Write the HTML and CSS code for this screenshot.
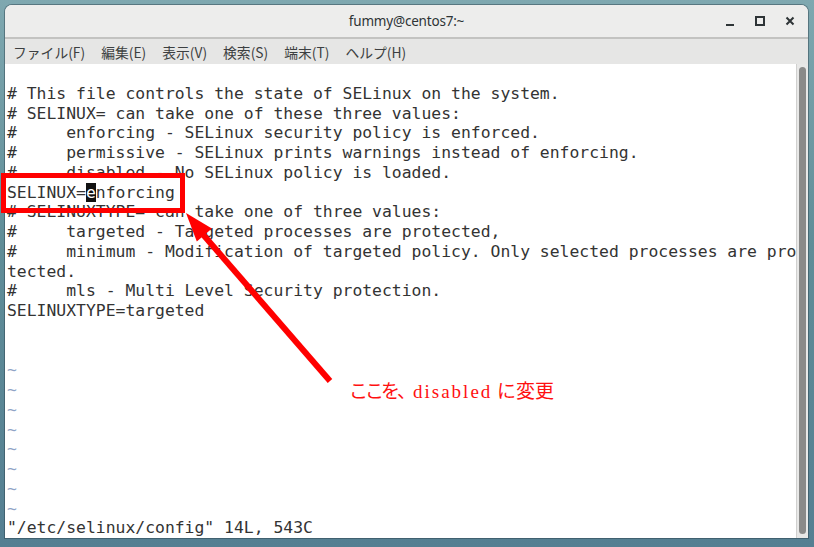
FILE: index.html
```html
<html>

<head>
    <link rel="stylesheet" href="styles.css">
</head>

<body>
    <div class="window">
        <div class="titlebar">
            <div></div>
            <div class="title">fummy@centos7:~</div>
            <div class="controls">
                <span class="ctl ctl-min"></span>
                <span class="ctl ctl-max"></span>
                <span class="ctl ctl-close">
                    <svg width="10" height="10" viewBox="0 0 10 10">
                        <path d="M1.5 1.5 L8.5 8.5 M8.5 1.5 L1.5 8.5" stroke="#2e3436" stroke-width="2" />
                    </svg>
                </span>
            </div>
        </div>
        <div class="menubar">
            <span>ファイル(F)</span>
            <span>編集(E)</span>
            <span>表示(V)</span>
            <span>検索(S)</span>
            <span>端末(T)</span>
            <span>ヘルプ(H)</span>
        </div>
        <div class="terminal">
            <div class="screen">
                <div class="row"> </div>
                <div class="row"># This file controls the state of SELinux on the system.</div>
                <div class="row"># SELINUX= can take one of these three values:</div>
                <div class="row">#     enforcing - SELinux security policy is enforced.</div>
                <div class="row">#     permissive - SELinux prints warnings instead of enforcing.</div>
                <div class="row">#     disabled - No SELinux policy is loaded.</div>
                <div class="row">SELINUX=<span class="cursor">e</span>nforcing</div>
                <div class="row"># SELINUXTYPE= can take one of three values:</div>
                <div class="row">#     targeted - Targeted processes are protected,</div>
                <div class="row">#     minimum - Modification of targeted policy. Only selected processes are pro</div>
                <div class="row">tected.</div>
                <div class="row">#     mls - Multi Level Security protection.</div>
                <div class="row">SELINUXTYPE=targeted</div>
                <div class="row"> </div>
                <div class="row"> </div>
                <div class="row tilde">~</div>
                <div class="row tilde">~</div>
                <div class="row tilde">~</div>
                <div class="row tilde">~</div>
                <div class="row tilde">~</div>
                <div class="row tilde">~</div>
                <div class="row tilde">~</div>
                <div class="row tilde">~</div>
                <div class="row">"/etc/selinux/config" 14L, 543C</div>
            </div>
            <div class="scrollbar">
                <div class="thumb"></div>
            </div>
        </div>
    </div>

    <!-- annotation drawn over the screenshot -->
    <svg class="markup" width="814" height="547" viewBox="0 0 814 547">
        <rect x="3.5" y="175.5" width="179" height="35" fill="none" stroke="#ff0000" stroke-width="5" />
        <line x1="330" y1="381" x2="200" y2="231" stroke="#ff0000" stroke-width="6" />
        <polygon points="186,213 196.8,241.6 211.9,228.6" fill="#ff0000" />
    </svg>
    <div class="note"><span class="note-jp">ここを、</span><span class="note-en">disabled</span> に変更</div>
</body>

</html>
```

FILE: styles.css
```css
body {
    margin: 0;
    padding: 5px 6px 9px 5px;
    width: 814px;
    height: 547px;
    box-sizing: border-box;
    overflow: hidden;
    background: linear-gradient(180deg, #7fa8b0 0%, #5f8d98 45%, #557f92 100%);
    font-family: "Noto Sans CJK JP", "Noto Sans", sans-serif;
    position: relative;
}

.window {
    height: 100%;
    display: flex;
    flex-direction: column;
    border-radius: 7px 7px 0 0;
    overflow: hidden;
    background-color: #ffffff;
    box-shadow: 0 0 0 1px rgba(40, 60, 70, 0.45);
}

.titlebar {
    height: 32px;
    display: grid;
    grid-template-columns: 1fr auto 1fr;
    align-items: center;
    background-color: #ededec;
    border-bottom: 2px solid #c3c3c1;
}

.title {
    font-family: "Noto Sans", sans-serif;
    font-size: 13.5px;
    color: #2e3436;
    letter-spacing: -0.2px;
}

.controls {
    display: flex;
    justify-content: flex-end;
    align-items: center;
    padding-right: 3px;
}

.ctl {
    width: 30px;
    height: 20px;
    display: flex;
    align-items: center;
    justify-content: center;
}

.ctl-min::before {
    content: "";
    width: 8px;
    height: 2px;
    margin-top: 7px;
    background-color: #2e3436;
}

.ctl-max::before {
    content: "";
    width: 6px;
    height: 6px;
    border: 2px solid #2e3436;
}

.menubar {
    height: 25px;
    display: flex;
    align-items: center;
    gap: 16px;
    padding-left: 8px;
    background-color: #e6e6e5;
    font-size: 13.8px;
    color: #3c3f41;
}

.terminal {
    flex: 1;
    display: flex;
    min-height: 0;
}

.screen {
    flex: 1;
    padding-left: 2px;
    font-family: "DejaVu Sans Mono", monospace;
    font-size: 16.4px;
    line-height: 19.75px;
    color: #333333;
    background-color: #ffffff;
}

.row {
    white-space: pre;
    height: 19.75px;
}

.cursor {
    background-color: #111111;
    color: #ffffff;
}

.tilde {
    color: #8ea3c6;
}

.scrollbar {
    width: 14px;
    background-color: #e8e8e7;
    border-left: 1px solid #d0d0cf;
    display: flex;
    justify-content: center;
    padding: 3px 0 4px;
    box-sizing: border-box;
}

.thumb {
    width: 7px;
    border-radius: 4px;
    background-color: #8a8a89;
}

.markup {
    position: absolute;
    left: 0;
    top: 0;
}

.note {
    position: absolute;
    left: 349px;
    top: 380px;
    font-family: "Liberation Serif", "Noto Sans CJK JP", serif;
    font-size: 19px;
    line-height: 24px;
    color: #ff1010;
    white-space: pre;
}

.note-jp {
    letter-spacing: -3px;
}

.note-en {
    letter-spacing: 2px;
}
```
